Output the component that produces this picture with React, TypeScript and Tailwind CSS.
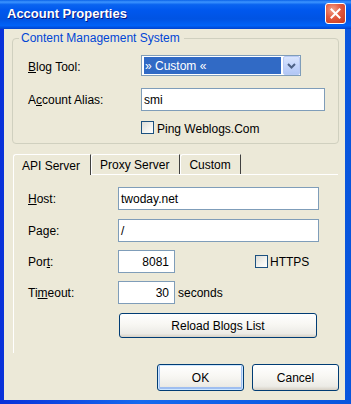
import React from "react";

function Check() {
  return (
    <span className="block w-[13px] h-[13px] shrink-0 border border-[#1C5180] bg-[linear-gradient(135deg,#DCDCD7_0%,#F4F4F0_60%,#FFFFFF_100%)]" />
  );
}

function Input({ value, w, right }: { value: string; w: string; right?: boolean }) {
  return (
    <div
      className={`${w} h-[23px] shrink-0 border border-[#7F9DB9] bg-white flex items-center ${
        right ? "justify-end pr-[5px]" : "pl-[2px]"
      }`}
    >
      {value}
    </div>
  );
}

function XpButton({ label, w, def }: { label: string; w: string; def?: boolean }) {
  return (
    <div
      className={`${w} flex items-center justify-center border border-[#003C74] rounded-[3px] bg-[linear-gradient(180deg,#FFFFFF_0%,#F8F7F3_45%,#ECEBE6_85%,#D6D0C5_100%)] ${
        def ? "shadow-[inset_0_0_0_1px_#CEE7FF,inset_0_-1px_0_2px_#9FBEF0]" : ""
      }`}
    >
      {label}
    </div>
  );
}

export default function App() {
  return (
    <div className="w-[351px] h-[404px] flex flex-col bg-[linear-gradient(90deg,#0831D9_0%,#166AEE_40%,#0855DD_100%)] font-['Liberation_Sans',Arial,sans-serif] text-[12px] leading-[14px] text-black overflow-hidden">
      {/* Title bar */}
      <div className="h-[29px] shrink-0 flex items-center pl-[7px] pr-[5px] bg-[linear-gradient(180deg,#0A62E8_0%,#3D95FF_7%,#0A64F0_16%,#0058EE_35%,#0053E3_65%,#0062F7_88%,#0043CF_100%)]">
        <span className="flex-1 text-white font-bold text-[13px] [text-shadow:1px_1px_0_#0A1883] pb-[1px]">
          Account Properties
        </span>
        <div className="w-[21px] h-[21px] mb-[2px] rounded-[3px] border border-white bg-[radial-gradient(circle_at_35%_30%,#F0A18A_0%,#E2583E_45%,#C43A1C_100%)] flex items-center justify-center">
          <svg width="11" height="11" viewBox="0 0 11 11">
            <path d="M1.5 1.5 L9.5 9.5 M9.5 1.5 L1.5 9.5" stroke="#FFFFFF" strokeWidth="2" strokeLinecap="square" />
          </svg>
        </div>
      </div>

      {/* Client area */}
      <div className="flex-1 ml-[4px] mr-[6px] mb-[4px] bg-[#ECE9D8] flex flex-col pt-[2px]">
        {/* Group box */}
        <fieldset className="ml-[8px] w-[327px] border border-[#D0D0BF] rounded-[4px]">
          <legend className="ml-[6px] pl-[2px] pr-[4px] text-[#0046D5]">Content Management System</legend>
          <div className="pl-[15px] pt-[10px] pb-[9px] flex flex-col">
            <div className="flex items-center h-[21px]">
              <span className="w-[113px] pt-[2px]">
                <u>B</u>log Tool:
              </span>
              <div className="w-[160px] h-[21px] border border-[#7F9DB9] bg-white flex">
                <div className="flex-1 my-[1px] ml-[2px] mr-[2px] bg-[#316AC5] text-white flex items-center pl-[1px]">
                  » Custom «
                </div>
                <div className="w-[17px] h-full rounded-[2px] border border-[#B9CAF5] bg-[linear-gradient(180deg,#D9E5FD_0%,#C4D5FB_50%,#B2C7F5_100%)] flex items-center justify-center">
                  <svg width="9" height="6" viewBox="0 0 9 6">
                    <path d="M1 1 L4.5 4.5 L8 1" stroke="#4D6185" strokeWidth="2" fill="none" />
                  </svg>
                </div>
              </div>
            </div>
            <div className="flex items-center h-[23px] mt-[12px]">
              <span className="w-[113px]">
                A<u>c</u>count Alias:
              </span>
              <Input value="smi" w="w-[184px]" />
            </div>
            <div className="flex items-center h-[13px] mt-[10px] pl-[113px]">
              <Check />
              <span className="ml-[3px] pt-[2px]">Ping Weblogs.Com</span>
            </div>
          </div>
        </fieldset>

        {/* Tabs */}
        <div className="mt-[10px] ml-[9px] flex items-end h-[20px]">
          <div className="relative z-10 h-[21px] -mb-px flex items-center pl-[8px] pr-[10px] pt-[1px] border-t border-l border-white border-r border-r-[#404040] rounded-tl-[3px] bg-[#ECE9D8]">
            API Server
          </div>
          <div className="h-[20px] flex items-center pl-[8px] pr-[10px] pt-[1px] border-t border-l border-white border-r border-r-[#404040] rounded-tl-[3px]">
            Proxy Server
          </div>
          <div className="h-[20px] flex items-center pl-[8px] pr-[9px] pt-[1px] border-t border-l border-white border-r border-r-[#404040] rounded-tl-[3px]">
            Custom
          </div>
        </div>
        <div className="ml-[9px] w-[325px] h-[179px] border-t border-l border-white pl-[14px] pt-[12px] flex flex-col">
          <div className="flex items-center h-[23px]">
            <span className="w-[90px]">
              <u>H</u>ost:
            </span>
            <Input value="twoday.net" w="w-[201px]" />
          </div>
          <div className="flex items-center h-[23px] mt-[9px]">
            <span className="w-[90px]">
              Pa<u>g</u>e:
            </span>
            <Input value="/" w="w-[201px]" />
          </div>
          <div className="flex items-center h-[23px] mt-[8px]">
            <span className="w-[90px]">
              Por<u>t</u>:
            </span>
            <Input value="8081" w="w-[57px]" right />
            <span className="ml-[80px]">
              <Check />
            </span>
            <span className="ml-[2px] pt-[1px]">HTTPS</span>
          </div>
          <div className="flex items-center h-[23px] mt-[8px]">
            <span className="w-[90px]">
              Ti<u>m</u>eout:
            </span>
            <Input value="30" w="w-[57px]" right />
            <span className="ml-[3px]">seconds</span>
          </div>
          <div className="flex mt-[9px] pl-[91px]">
            <XpButton label="Reload Blogs List" w="w-[198px] h-[25px]" />
          </div>
        </div>

        {/* Buttons */}
        <div className="mt-[11px] flex justify-end gap-[8px] pr-[6px]">
          <XpButton label="OK" w="w-[87px] h-[27px]" def />
          <XpButton label="Cancel" w="w-[87px] h-[27px]" />
        </div>
      </div>
    </div>
  );
}
